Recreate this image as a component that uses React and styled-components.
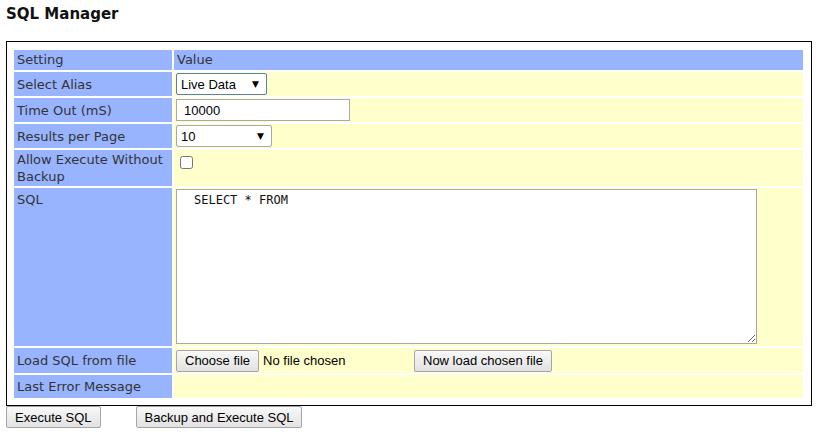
import React from 'react'
import styled, { createGlobalStyle } from 'styled-components'

const GlobalStyle = createGlobalStyle`
  html, body {
    margin: 0;
    padding: 0;
    background: #fff;
  }
  body {
    padding: 4px 6px;
    font-family: "DejaVu Sans", Verdana, sans-serif;
    color: #222;
  }
`

const Title = styled.h1`
  margin: 0 0 17px 0;
  font-size: 15px;
  line-height: 20px;
  font-weight: bold;
  color: #111;
`

const Panel = styled.div`
  width: 806px;
  box-sizing: border-box;
  border: 1px solid #000;
  padding: 6px 6px 5px 5px;
`

const Settings = styled.table`
  width: 100%;
  border-spacing: 2px;
  font-size: 13px;
`

const HeadCell = styled.th`
  background: #99b4ff;
  font-weight: normal;
  text-align: left;
  padding: 1px 3px;
  line-height: 18px;
  color: #333;
`

const LabelCell = styled.td`
  width: 152px;
  background: #99b4ff;
  padding: 1px 3px;
  line-height: 17px;
  color: #333;
  vertical-align: ${p => (p.$top ? 'top' : 'middle')};
  padding-top: ${p => (p.$top ? '3px' : '1px')};
`

const ValueCell = styled.td`
  background: #ffffcc;
  padding: 1px 1px 1px 2px;
  vertical-align: top;
  line-height: 0;
  height: ${p => (p.$h ? `${p.$h}px` : 'auto')};
  box-sizing: border-box;
`

const SelectWrap = styled.span`
  position: relative;
  display: inline-block;
`

const Select = styled.select`
  appearance: none;
  width: ${p => p.$width}px;
  height: 22px;
  box-sizing: border-box;
  border: 1px solid ${p => (p.$focus ? '#5b7fb5' : '#a9a9a9')};
  border-radius: 2px;
  background: #fff;
  padding: 0 0 0 4px;
  font-family: "Liberation Sans", Arial, sans-serif;
  font-size: 13px;
  color: #000;
`

const Arrow = styled.span`
  position: absolute;
  right: 8px;
  top: 6px;
  font-size: 9px;
  line-height: 10px;
  color: #000;
  pointer-events: none;
`

const TextInput = styled.input`
  width: 174px;
  height: 22px;
  box-sizing: border-box;
  margin: 0;
  border: 1px solid #a9a9a9;
  padding: 0 7px;
  font-family: "Liberation Sans", Arial, sans-serif;
  font-size: 13px;
  color: #000;
`

const Check = styled.input`
  margin: 5px 0 0 4px;
  width: 13px;
  height: 13px;
`

const SqlArea = styled.textarea`
  display: block;
  width: 581px;
  height: 155px;
  box-sizing: border-box;
  margin: 0 0 1px 0;
  border: 1px solid #a9a9a9;
  padding: 3px 4px 4px 17px;
  font-family: "DejaVu Sans Mono", "Liberation Mono", monospace;
  font-size: 12px;
  line-height: 15px;
  color: #111;
  resize: both;
`

const Button = styled.button`
  height: 22px;
  box-sizing: border-box;
  padding: 0 8px;
  border: 1px solid #a6a6a6;
  border-radius: 2px;
  background: linear-gradient(#f8f8f8, #e2e2e2);
  font-family: "Liberation Sans", Arial, sans-serif;
  font-size: 13px;
  color: #000;
  margin-left: ${p => p.$gap || 0}px;
`

const FileRow = styled.div`
  display: flex;
  align-items: center;
  height: 23px;
  line-height: normal;
`

const FilePicker = styled.span`
  display: inline-flex;
  align-items: center;
  width: 238px;
  gap: 4px;
  font-family: "Liberation Sans", Arial, sans-serif;
  font-size: 13px;
  color: #000;
`

const Actions = styled.div`
  display: flex;
  align-items: center;
`

export default function App() {
  return (
    <>
      <GlobalStyle />
      <Title>SQL Manager</Title>
      <Panel>
        <Settings>
          <tbody>
            <tr>
              <HeadCell>Setting</HeadCell>
              <HeadCell>Value</HeadCell>
            </tr>
            <tr>
              <LabelCell>Select Alias</LabelCell>
              <ValueCell>
                <SelectWrap>
                  <Select $width={91} $focus defaultValue="live">
                    <option value="live">Live Data</option>
                  </Select>
                  <Arrow>▼</Arrow>
                </SelectWrap>
              </ValueCell>
            </tr>
            <tr>
              <LabelCell>Time Out (mS)</LabelCell>
              <ValueCell>
                <TextInput defaultValue="10000" />
              </ValueCell>
            </tr>
            <tr>
              <LabelCell>Results per Page</LabelCell>
              <ValueCell>
                <SelectWrap>
                  <Select $width={96} defaultValue="10">
                    <option value="10">10</option>
                  </Select>
                  <Arrow>▼</Arrow>
                </SelectWrap>
              </ValueCell>
            </tr>
            <tr>
              <LabelCell>Allow Execute Without Backup</LabelCell>
              <ValueCell>
                <Check type="checkbox" />
              </ValueCell>
            </tr>
            <tr>
              <LabelCell $top>SQL</LabelCell>
              <ValueCell>
                <SqlArea defaultValue="SELECT * FROM" />
              </ValueCell>
            </tr>
            <tr>
              <LabelCell>Load SQL from file</LabelCell>
              <ValueCell>
                <FileRow>
                  <FilePicker>
                    <Button>Choose file</Button>
                    No file chosen
                  </FilePicker>
                  <Button>Now load chosen file</Button>
                </FileRow>
              </ValueCell>
            </tr>
            <tr>
              <LabelCell>Last Error Message</LabelCell>
              <ValueCell $h={23} />
            </tr>
          </tbody>
        </Settings>
      </Panel>
      <Actions>
        <Button>Execute SQL</Button>
        <Button $gap={35}>Backup and Execute SQL</Button>
      </Actions>
    </>
  )
}
